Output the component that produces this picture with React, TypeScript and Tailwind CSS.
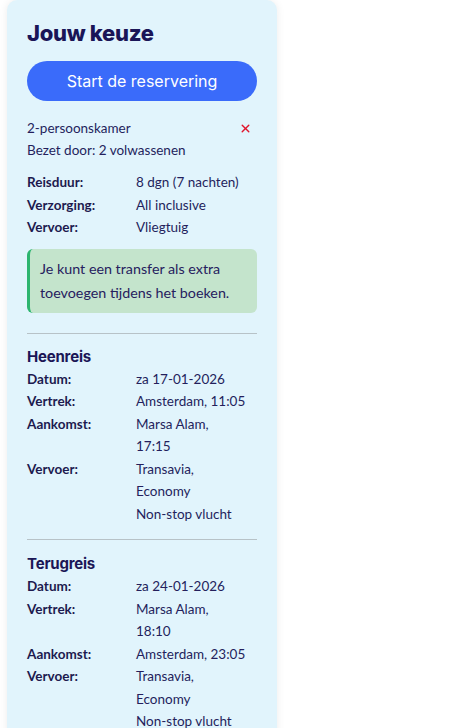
import { IoClose } from 'react-icons/io5';

const heenreis = [
  { label: 'Datum:', lines: ['za 17-01-2026'] },
  { label: 'Vertrek:', lines: ['Amsterdam, 11:05'] },
  { label: 'Aankomst:', lines: ['Marsa Alam,', '17:15'] },
  { label: 'Vervoer:', lines: ['Transavia,', 'Economy', 'Non-stop vlucht'] },
];

const terugreis = [
  { label: 'Datum:', lines: ['za 24-01-2026'] },
  { label: 'Vertrek:', lines: ['Marsa Alam,', '18:10'] },
  { label: 'Aankomst:', lines: ['Amsterdam, 23:05'] },
  { label: 'Vervoer:', lines: ['Transavia,', 'Economy', 'Non-stop vlucht'] },
];

const summary = [
  { label: 'Reisduur:', value: '8 dgn (7 nachten)' },
  { label: 'Verzorging:', value: 'All inclusive' },
  { label: 'Vervoer:', value: 'Vliegtuig' },
];

function FlightBlock({ title, rows }: { title: string; rows: { label: string; lines: string[] }[] }) {
  return (
    <div>
      <h3 className="text-[15px] font-bold leading-[22px] text-[#1b1656] font-['Inter',sans-serif] tracking-[-0.2px]">
        {title}
      </h3>
      <div className="grid grid-cols-[109px_1fr] text-[13.5px] leading-[22.5px]">
        {rows.map((row) => (
          <div key={row.label} className="contents">
            <div className="font-bold text-[#1d1a4f]">{row.label}</div>
            <div className="text-[#241f5c]">
              {row.lines.map((l) => (
                <div key={l}>{l}</div>
              ))}
            </div>
          </div>
        ))}
      </div>
    </div>
  );
}

export default function App() {
  return (
    <div className="min-h-screen bg-white font-['Lato',sans-serif]">
      <div className="ml-[7px] w-[270px] h-[760px] rounded-t-[10px] bg-[#e1f4fc] shadow-[0_0_8px_rgba(0,0,0,0.08)] px-5 pt-[20px]">
        <h2 className="text-[22px] font-extrabold leading-[26px] text-[#1a1557] font-['Inter',sans-serif] tracking-[-0.3px]">
          Jouw keuze
        </h2>

        <button className="mt-[15px] w-full h-10 rounded-full bg-[#3a6bfa] text-white text-[16px] font-['Inter',sans-serif]">
          Start de reservering
        </button>

        {/* Room */}
        <div className="mt-[16px] text-[13.5px] leading-[22px] text-[#241f5c]">
          <div className="flex items-center justify-between">
            <span>2-persoonskamer</span>
            <IoClose className="w-[15px] h-[15px] text-[#e0142b] mr-[4px]" />
          </div>
          <div>Bezet door: 2 volwassenen</div>
        </div>

        <div className="mt-[10px] grid grid-cols-[109px_1fr] text-[13.5px] leading-[22.5px]">
          {summary.map((s) => (
            <div key={s.label} className="contents">
              <div className="font-bold text-[#1d1a4f]">{s.label}</div>
              <div className="text-[#241f5c]">{s.value}</div>
            </div>
          ))}
        </div>

        <div className="mt-[10px] rounded-md bg-[#c4e4cc] border-l-[3px] border-[#2db56f] pl-[10px] pr-3 py-[8px] text-[14.3px] leading-[24px] text-[#26205e]">
          Je kunt een transfer als extra toevoegen tijdens het boeken.
        </div>

        <hr className="mt-[20px] border-0 h-px bg-[#b7c2c7]" />

        <div className="mt-[12px]">
          <FlightBlock title="Heenreis" rows={heenreis} />
        </div>

        <hr className="mt-[14px] border-0 h-px bg-[#b7c2c7]" />

        <div className="mt-[13px]">
          <FlightBlock title="Terugreis" rows={terugreis} />
        </div>
      </div>
    </div>
  );
}
